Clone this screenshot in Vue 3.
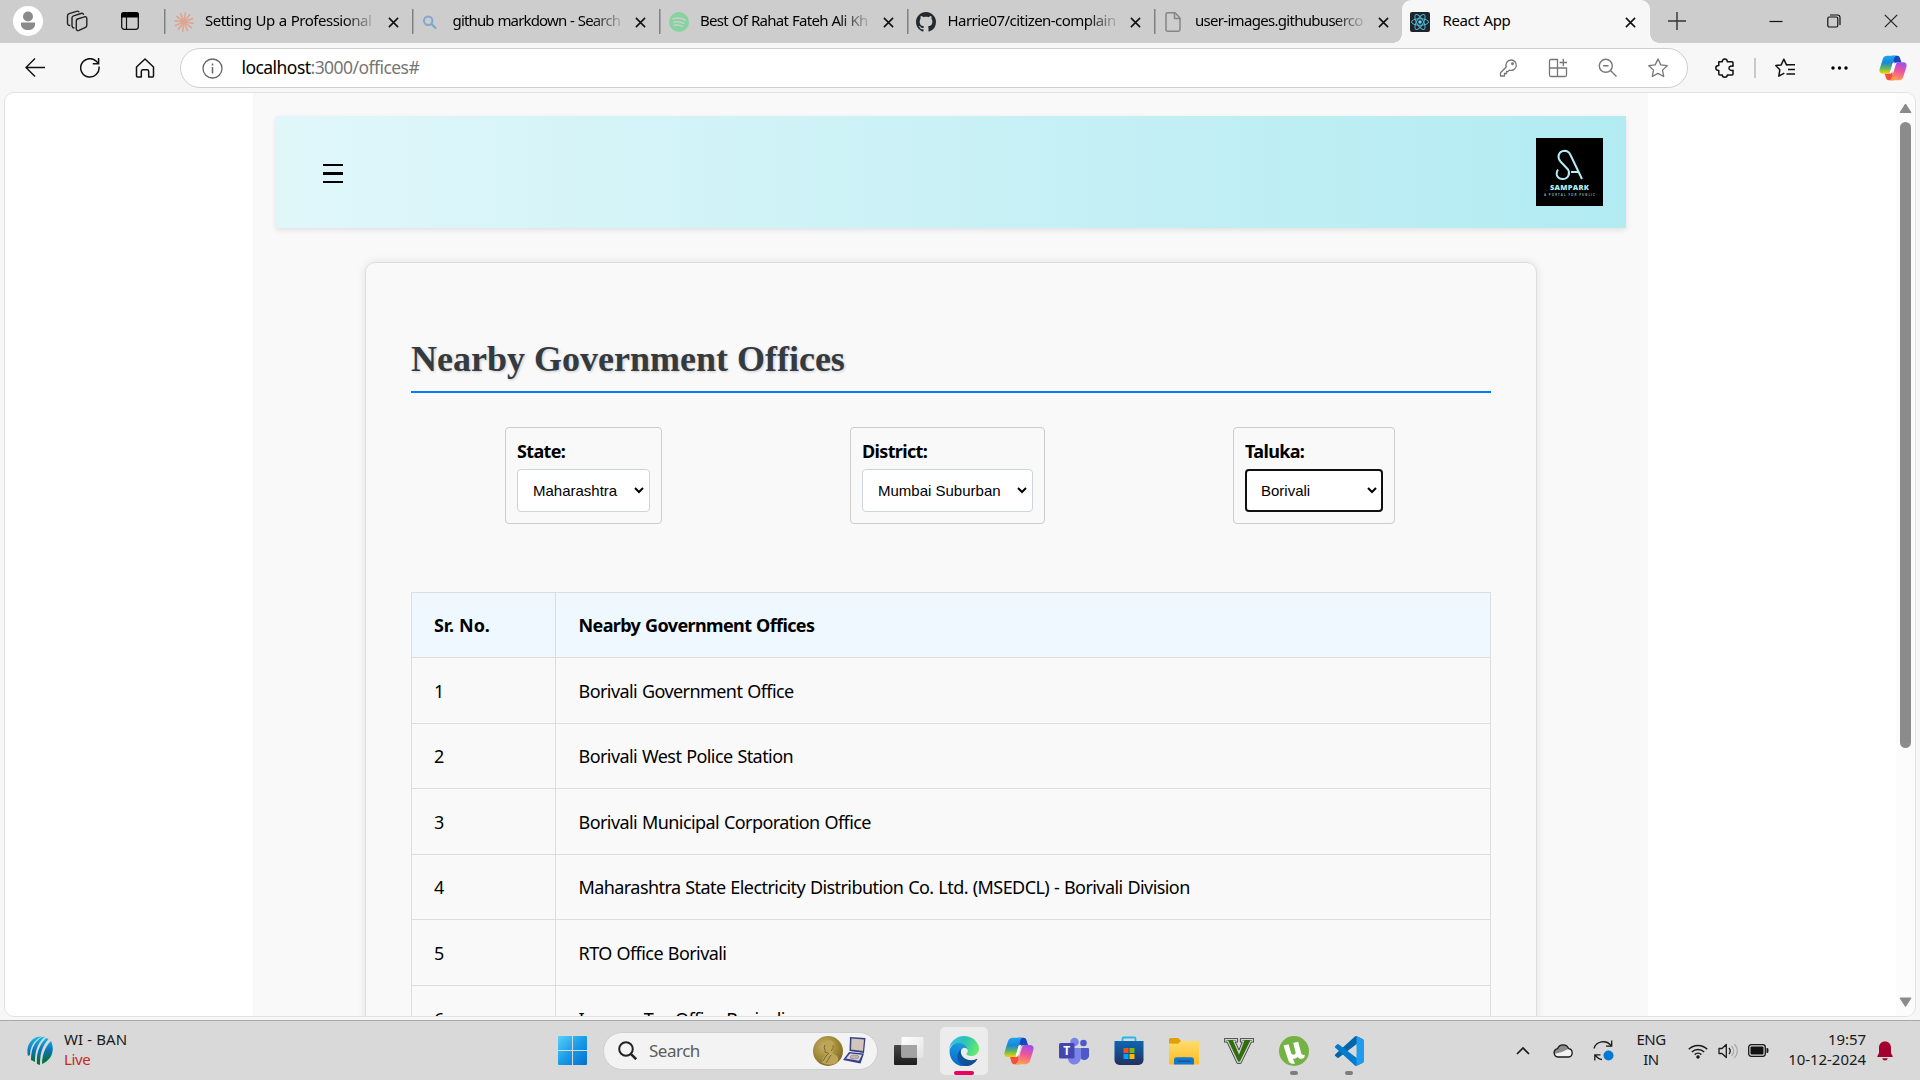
<script setup>
const tabs = [
  { icon: 'claude', title: 'Setting Up a Professional' },
  { icon: 'search', title: 'github markdown - Search' },
  { icon: 'spotify', title: 'Best Of Rahat Fateh Ali Kh' },
  { icon: 'github', title: 'Harrie07/citizen-complain' },
  { icon: 'file', title: 'user-images.githubuserco' },
]

const filters = [
  { label: 'State:', value: 'Maharashtra', size: 'state' },
  { label: 'District:', value: 'Mumbai Suburban', size: 'district' },
  { label: 'Taluka:', value: 'Borivali', size: 'taluka' },
]

const offices = [
  'Borivali Government Office',
  'Borivali West Police Station',
  'Borivali Municipal Corporation Office',
  'Maharashtra State Electricity Distribution Co. Ltd. (MSEDCL) - Borivali Division',
  'RTO Office Borivali',
  'Income Tax Office Borivali',
]

const rays = Array.from({ length: 12 }, (_, i) => i * 30 + 8)
</script>

<template>
  <div class="screen">
    <svg class="defs" width="0" height="0">
      <defs>
        <linearGradient id="cpA" x1="0" y1="0" x2="0" y2="1">
          <stop offset="0" stop-color="#1aa5f0" /><stop offset=".4" stop-color="#1c86d8" />
          <stop offset=".7" stop-color="#5fb95a" /><stop offset="1" stop-color="#ffd000" />
        </linearGradient>
        <linearGradient id="cpB" x1=".6" y1="0" x2=".4" y2="1">
          <stop offset="0" stop-color="#a24de8" /><stop offset=".5" stop-color="#f0569a" />
          <stop offset="1" stop-color="#ffa04d" />
        </linearGradient>
        <symbol id="copilot" viewBox="0 0 30 28">
          <path d="M14 .8h5.500c2 0 2.700 1.300 3.200 3l1.400 4.400h-4.600c-2 0-3 .8-3.500 2.500z" fill="#1747c0" />
          <path d="M16 27.200h-5.500c-2 0-2.700-1.300-3.200-3l-1.400-4.400h4.600c2 0 3-.8 3.500-2.500z" fill="#f2503b" />
          <path d="M9 .8h9.800c-1.700.6-2.300 2-2.900 4l-3.800 12.400c-.6 2-1.500 2.900-3.600 2.900H4.100C.8 20.100-.2 17.800.7 14.700L4 4.300C4.700 2 6.300.8 9 .8z" fill="url(#cpA)" />
          <path d="M21 27.200h-9.800c1.700-.6 2.300-2 2.900-4l3.800-12.400c.6-2 1.500-2.900 3.600-2.900h4.400c3.300 0 4.300 2.300 3.400 5.400L26 23.700c-.7 2.300-2.300 3.500-5 3.500z" fill="url(#cpB)" />
          <path d="M14.200 10.500c.6-1.700 1.400-2.500 3-2.700l-2.900 9.700c-.6 1.700-1.300 2.500-2.900 2.700z" fill="#fff" />
        </symbol>
        <symbol id="cross" viewBox="0 0 12 12">
          <path d="M1 1l10 10M11 1L1 11" fill="none" stroke="#111" stroke-width="1.700" />
        </symbol>
      </defs>
    </svg>

    <header class="tabstrip">
      <div class="strip-left">
        <span class="avatar">
          <svg width="30" height="30"><circle cx="15" cy="10.500" r="5" fill="#8a8a8a" /><path d="M8 16.500h14v2c0 3.500-3 5.500-7 5.500s-7-2-7-5.500z" fill="#8a8a8a" /></svg>
        </span>
        <svg class="i-spaces" width="22" height="22" viewBox="0 0 22 22" fill="none" stroke="#222" stroke-width="1.400">
          <path d="M11.500 9l7-2.200c1.500-.4 2.300.4 2.300 2v6.400c0 1.200-.6 2-1.800 2.500l-6 2.700c-1.500.6-2.700 0-2.700-1.700v-7.600c0-1.100.4-1.700 1.200-2.100z" />
          <path d="M8.500 17.800c-1.600.2-2.500-.6-2.500-2.200V7.800c0-1 .6-1.700 1.600-2L15 3.500c1.300-.4 2.300 0 2.700 1.200" />
          <path d="M4.300 15.500c-1.600.2-2.800-.7-2.800-2.200V6c0-1.200.5-2 1.600-2.300L10.500 1.300c1.300-.4 2.300 0 2.700 1" />
        </svg>
        <svg class="i-actions" width="18" height="18" viewBox="0 0 18 18"><rect x=".7" y=".7" width="16.600" height="16.600" rx="2.500" fill="none" stroke="#111" stroke-width="1.300" /><path d="M0 5.500V3a3 3 0 0 1 3-3h12a3 3 0 0 1 3 3v2.500z" fill="#000" /><path d="M5.500 5v12.500" stroke="#111" stroke-width="1.200" /></svg>
      </div>

      <div v-for="tab in tabs" :key="tab.icon" class="tab" :class="'t-' + tab.icon">
        <svg v-if="tab.icon === 'claude'" class="fav" viewBox="0 0 20 20"><path v-for="a in rays" :key="a" d="M10 8.500V.8" :transform="`rotate(${a} 10 10)`" stroke="#dfa593" stroke-width="1.600" stroke-linecap="round" /><circle cx="10" cy="10" r="3" fill="#dfa593" /></svg>
        <svg v-else-if="tab.icon === 'search'" class="fav" viewBox="0 0 20 20" fill="none" stroke="#7ba8cf" stroke-width="2"><circle cx="7.200" cy="8.800" r="4.200" /><path d="M10.500 12l4.500 4.500" stroke-width="2.200" /></svg>
        <svg v-else-if="tab.icon === 'spotify'" class="fav" viewBox="0 0 20 20"><circle cx="10" cy="10" r="10" fill="#86d3a0" /><path d="M4 6.800c4-1.200 8.500-.8 12.200 1.200M4.600 10.200c3.500-1 7-.6 10.200 1.200M5.200 13.300c3-.7 5.600-.4 8.200 1.100" fill="none" stroke="#cdcdcd" stroke-width="1.500" stroke-linecap="round" /></svg>
        <svg v-else-if="tab.icon === 'github'" class="fav" viewBox="0 0 16 16"><path fill="#24292e" d="M8 0C3.580 0 0 3.580 0 8c0 3.540 2.290 6.530 5.470 7.590.4.070.55-.17.55-.38 0-.19-.01-.82-.01-1.490-2.010.37-2.530-.49-2.690-.94-.09-.23-.48-.94-.82-1.130-.28-.15-.68-.52-.01-.53.63-.01 1.080.58 1.230.82.72 1.210 1.870.87 2.330.66.070-.52.28-.87.51-1.070-1.780-.2-3.640-.89-3.640-3.950 0-.87.31-1.590.82-2.150-.08-.2-.36-1.020.08-2.120 0 0 .67-.21 2.200.82.64-.18 1.320-.27 2-.27s1.360.09 2 .27c1.530-1.040 2.200-.82 2.200-.82.44 1.100.16 1.920.08 2.120.51.56.82 1.270.82 2.150 0 3.070-1.870 3.750-3.650 3.950.29.25.54.73.54 1.480 0 1.070-.01 1.930-.01 2.200 0 .21.15.46.55.38A8.010 8.010 0 0 0 16 8c0-4.420-3.580-8-8-8z" /></svg>
        <svg v-else class="fav" viewBox="0 0 20 20" fill="none" stroke="#858585" stroke-width="1.500"><path d="M4 .8h7L16 6v11.500c0 1-.7 1.700-1.700 1.700H3.700c-1 0-1.700-.7-1.700-1.700v-15C2 1.500 2.700.8 4 .8z" /><path d="M10.500 1v5.500H16" /></svg>
        <span class="tab-title faded">{{ tab.title }}</span>
        <svg class="close"><use href="#cross" /></svg>
      </div>

      <div class="tab active">
        <svg class="fav" viewBox="0 0 20 20"><rect width="20" height="20" rx="2" fill="#20232a" /><g fill="none" stroke="#4cb8d6" stroke-width="1"><ellipse cx="10" cy="10" rx="8.500" ry="3.300" /><ellipse cx="10" cy="10" rx="8.500" ry="3.300" transform="rotate(60 10 10)" /><ellipse cx="10" cy="10" rx="8.500" ry="3.300" transform="rotate(120 10 10)" /></g><circle cx="10" cy="10" r="1.700" fill="#61dafb" /></svg>
        <span class="tab-title">React App</span>
        <svg class="close"><use href="#cross" /></svg>
      </div>

      <svg class="plus" width="18" height="18"><path d="M9 0v18M0 9h18" stroke="#333" stroke-width="1.400" /></svg>
      <div class="win-buttons">
        <svg width="14" height="14"><path d="M.5 7.500h13" stroke="#111" stroke-width="1.200" /></svg>
        <svg width="14" height="14" fill="none" stroke="#111" stroke-width="1.200"><rect x=".8" y="3" width="10" height="10" rx="1.500" /><path d="M3 1h7.500C12 1 13 2 13 3.500V11" /></svg>
        <svg width="14" height="14"><path d="M.8.8l12.400 12.400M13.200.8L.8 13.200" stroke="#222" stroke-width="1.200" /></svg>
      </div>
    </header>

    <nav class="toolbar">
      <div class="nav-icons">
        <svg width="20" height="20" fill="none" stroke="#111" stroke-width="1.400"><path d="M20 9.500H1M10 .5l-9 9 9 9" /></svg>
        <svg width="20" height="20" fill="none" stroke="#111" stroke-width="1.500"><path d="M19 8.500A9.200 9.200 0 1 1 15.800 2.800L18.500 5.500" /><path d="M18.600 0v5.700h-5.800" /></svg>
        <svg width="20" height="20" fill="none" stroke="#111" stroke-width="1.500"><path d="M1.500 9L10 1l8.500 8v9c0 .6-.4 1-1 1h-3.800v-5.500c0-1-.6-1.700-1.600-1.700H8c-1 0-1.700.7-1.700 1.700V19H2.500c-.6 0-1-.4-1-1z" stroke-linejoin="round" /></svg>
      </div>
      <div class="omnibox">
        <svg width="21" height="21" fill="none" stroke="#666" stroke-width="1.300"><circle cx="10.500" cy="10.500" r="9.500" /><path d="M10.500 9v6.500M10.500 5.500v2" stroke-width="1.500" /></svg>
        <span class="url"><b>localhost</b>:3000/offices#</span>
        <svg width="20" height="20" fill="none" stroke="#767676" stroke-width="1.300"><path d="M13 2a5.200 5.200 0 1 1-1.600 10.100L10 13.500H8.500v2H6.500V18H2.500v-3.300L8.200 9A5.300 5.300 0 0 1 13 2z" stroke-linejoin="round" /><circle cx="14.500" cy="5.800" r=".8" fill="#767676" /></svg>
        <svg width="20" height="20" fill="none" stroke="#767676" stroke-width="1.300"><path d="M9.500 18.500V1.500H3c-.8 0-1.500.7-1.500 1.500v14c0 .8.700 1.500 1.500 1.500h14c.8 0 1.500-.7 1.500-1.500v-7H1.500M15.300.8v7.400M11.600 4.500H19" /></svg>
        <svg width="20" height="20" fill="none" stroke="#767676" stroke-width="1.400"><circle cx="7.800" cy="7.800" r="6.500" /><path d="M5 7.800h5.600M12.500 12.500l6 6" /></svg>
        <svg width="20" height="20" fill="none" stroke="#767676" stroke-width="1.300"><path d="M10 1l2.800 5.900 6.400.8-4.700 4.400 1.200 6.400L10 15.400l-5.700 3.100 1.200-6.400L.8 7.700l6.400-.8z" stroke-linejoin="round" /></svg>
      </div>
      <svg class="puzzle" width="20" height="20" fill="none" stroke="#111" stroke-width="1.500"><path d="M3.800 3.800h3.500c0-1.600 1-2.800 2.500-2.800s2.500 1.200 2.500 2.800H17c.6 0 1 .4 1 1v3.400c-1.800-.5-4 .1-4 2s2.200 2.500 4 2V16c0 .6-.4 1-1 1h-4.700c0 1.200-1 2.200-2.500 2.200S7.300 18.200 7.300 17H4.800c-.6 0-1-.4-1-1v-3.500C2 12.500.8 11.600.8 10s1.200-2.500 3-2.500z" stroke-linejoin="round" /></svg>
      <span class="bar-sep"></span>
      <svg class="favs" width="20" height="20" fill="none" stroke="#111" stroke-width="1.500"><path d="M12.500 6.800h-1L8.800 1.200 6.200 6.900l-5.400.6 4 4.300-1 6.400 5.500-3" stroke-linejoin="round" /><path d="M11.300 6.800H20M13 11.500h7M11.500 16H20" /></svg>
      <svg class="dots" width="17" height="4"><circle cx="2" cy="2" r="1.700" /><circle cx="8.500" cy="2" r="1.700" /><circle cx="15" cy="2" r="1.700" /></svg>
      <svg class="cp" width="28" height="26"><use href="#copilot" /></svg>
    </nav>

    <div class="viewport">
      <div class="page">
        <div class="app">
          <div class="banner">
            <span class="menu"><i></i><i></i><i></i></span>
            <svg class="logo" width="67" height="68" viewBox="0 0 67 68">
              <rect width="67" height="68" />
              <path d="M22 31.500c-3.500 6 .5 9.500 4.500 9.500 6 0 8-6 5.500-9.500l-7.500-8c-3.800-4.300-2-10.500 4-10.800 3 0 4.800 1.500 6 4.300L46 41M35 34h8" fill="none" stroke="#b2ebf2" stroke-width="2" />
              <text class="logo-name" x="33.500" y="51.800" textLength="39" text-anchor="middle">SAMPARK</text>
              <text class="logo-tag" x="33.500" y="57.600" textLength="51" text-anchor="middle">A PORTAL FOR PUBLIC</text>
            </svg>
          </div>

          <main class="card">
            <h1>Nearby Government Offices</h1>
            <div class="filters">
              <div v-for="f in filters" :key="f.label" class="filter" :class="f.size">
                <label>{{ f.label }}</label>
                <div class="select">
                  <span>{{ f.value }}</span>
                  <svg width="10" height="7"><path d="M1 1l4 4 4-4" fill="none" stroke="#000" stroke-width="2" /></svg>
                </div>
              </div>
            </div>
            <div class="table">
              <div class="row head"><span>Sr. No.</span><span>Nearby Government Offices</span></div>
              <div v-for="(o, i) in offices" :key="o" class="row"><span>{{ i + 1 }}</span><span>{{ o }}</span></div>
            </div>
          </main>
        </div>
      </div>
      <div class="scroll">
        <svg width="13" height="11"><path d="M6.500 1L12 9.500H1z" fill="#8b8b8b" stroke="#8b8b8b" stroke-linejoin="round" /></svg>
        <span class="thumb"></span>
        <svg width="13" height="11"><path d="M6.500 9.500L12 1H1z" fill="#8b8b8b" stroke="#8b8b8b" stroke-linejoin="round" /></svg>
      </div>
    </div>

    <footer class="taskbar">
      <div class="widget">
        <svg width="26" height="29" viewBox="0 0 26 29">
          <defs><linearGradient id="icc" gradientUnits="userSpaceOnUse" x1="12" y1="0" x2="14" y2="29"><stop offset="0" stop-color="#19bfe8" /><stop offset=".5" stop-color="#0a74b8" /><stop offset=".85" stop-color="#067048" /></linearGradient></defs>
          <g fill="url(#icc)"><path d="M1 20C-1 12 2 4 10 1L15 .5C7 4 3 11 3 19z" /><path d="M4 24C4 15 6 7 14 1.500l4-1C10 8 8 15 8 26z" /><path d="M10 28C9 18 12 9 19 2l2.500 1C15 10 13 18 13 29z" /><path d="M15 28c0-9 3-17 9-23 4 9 1 19-9 23z" /></g>
        </svg>
        <div class="widget-text"><span>WI - BAN</span><span class="live">Live</span></div>
      </div>

      <div class="start">
        <svg width="29" height="29" viewBox="0 0 29 29"><defs><linearGradient id="win" x1="0" y1="0" x2="1" y2="1"><stop offset="0" stop-color="#55d3fb" /><stop offset=".5" stop-color="#1a9be6" /><stop offset="1" stop-color="#0470d2" /></linearGradient></defs><path d="M0 1a1 1 0 0 1 1-1h13v14H0zM15 0h13a1 1 0 0 1 1 1v13H15zM0 15h14v14H1a1 1 0 0 1-1-1zM15 15h14v13a1 1 0 0 1-1 1H15z" fill="url(#win)" /></svg>
      </div>

      <div class="search">
        <svg width="19" height="19" fill="none" stroke="#222" stroke-width="2"><circle cx="8" cy="8" r="6.800" /><path d="M12.800 12.800l5.400 5.400" stroke-width="2.500" /></svg>
        <span>Search</span>
        <svg class="medal" width="53" height="30" viewBox="0 0 53 30">
          <defs><radialGradient id="gold" cx=".4" cy=".35" r=".7"><stop offset="0" stop-color="#c9b266" /><stop offset=".6" stop-color="#a08838" /><stop offset="1" stop-color="#7c6520" /></radialGradient></defs>
          <circle cx="15" cy="15" r="15" fill="url(#gold)" />
          <path d="M11 9c0-4 4.500-6 8-4 3 1.800 3 6 1 9l-.5 3 4.500 3c2 3 1.500 4 0 6.500-4 3-10 3-15 0l1-4.500 4-4-2-.5-.5-3-1.500-1z" fill="#bba557" />
          <path d="M10 25l3-5 3-3M18 19l-5 8M12 9l-1 3 1 1v3l3 1M20 9c1 3-1 5-2 6" fill="none" stroke="#75602a" stroke-width=".9" />
          <path d="M37 1l15.500 1-1.500 15-14.500-2z" fill="#36407f" /><path d="M38.500 2.500L51 3.500 50 15l-12-1.500z" fill="#d3c4be" />
          <path d="M36 16l15 1.500-3.500 10L30 24z" fill="#34418f" /><path d="M37 17.500l12 1.200-3 6L33 22.500z" fill="#e1d7d5" /><ellipse cx="41.500" cy="21" rx="4.500" ry="2" fill="#c3b3b0" stroke="#8d7f80" stroke-width=".6" />
        </svg>
      </div>

      <div class="apps">
        <span class="cell"><svg width="30" height="30"><defs><linearGradient id="tvd" x1="0" y1="0" x2="0" y2="1"><stop offset="0" stop-color="#484848" /><stop offset="1" stop-color="#1c1c1c" /></linearGradient><linearGradient id="tvl" x1="0" y1="0" x2="1" y2="1"><stop offset="0" stop-color="#fff" /><stop offset="1" stop-color="#e3e3e3" /></linearGradient></defs><rect y="9" width="23" height="20" rx="1" fill="url(#tvd)" /><rect x="7.500" y="1" width="22" height="20.500" rx="1" fill="url(#tvl)" /><path d="M7.500 9H23v12.500H8.500a1 1 0 0 1-1-1z" fill="#a3a3a3" /></svg></span>

        <span class="cell on"><svg width="30" height="30" viewBox="0 0 256 256"><defs><linearGradient id="eg1" x1="0" y1="0" x2="1" y2="0"><stop offset="0" stop-color="#0c59a4" /><stop offset="1" stop-color="#114a8b" /></linearGradient><linearGradient id="eg2" x1=".5" y1="0" x2=".3" y2="1"><stop offset="0" stop-color="#1b9de2" /><stop offset=".5" stop-color="#1183d6" /><stop offset="1" stop-color="#0667ca" /></linearGradient><linearGradient id="eg3" x1="0" y1=".2" x2="1" y2=".5"><stop offset="0" stop-color="#35c1f1" /><stop offset=".5" stop-color="#2cc2b4" /><stop offset="1" stop-color="#66eb6e" /></linearGradient></defs><path fill="url(#eg1)" d="M235.700 195.500a93.700 93.700 0 0 1-10.600 4.700 101.900 101.900 0 0 1-35.900 6.400c-47.300 0-88.500-32.500-88.500-74.300a31.500 31.500 0 0 1 16.400-27.300c-42.800 1.800-53.800 46.400-53.800 72.500 0 74 68.100 81.400 82.800 81.400 7.900 0 19.800-2.300 27-4.600l1.300-.4a128.300 128.300 0 0 0 66.600-52.800 4 4 0 0 0-5.300-5.600z" /><path fill="url(#eg2)" d="M110.300 246.300A79.200 79.200 0 0 1 87.600 225a80.700 80.700 0 0 1 29.500-120c3.200-1.500 8.500-4.100 15.600-4a32.400 32.400 0 0 1 25.700 13 31.900 31.900 0 0 1 6.300 18.700c0-.2 24.500-79.600-80-79.600-43.900 0-80 41.600-80 78.200a130.200 130.200 0 0 0 12.100 56 128 128 0 0 0 156.400 67 75.500 75.500 0 0 1-62.900-8z" /><path fill="url(#eg3)" d="M152.300 148.900c-.8 1-3.300 2.500-3.300 5.700 0 2.600 1.700 5.100 4.700 7.200 14.400 10 41.500 8.700 41.600 8.700a59.600 59.600 0 0 0 30.300-8.300 61.400 61.400 0 0 0 30.400-52.900c.3-22.400-8-37.300-11.300-43.900C223.500 23.900 177.700 0 128 0A128 128 0 0 0 0 126.200c.5-36.500 36.800-66 80-66 3.500 0 23.500.3 42 10a72.600 72.600 0 0 1 30.900 29.300c6.100 10.600 7.200 24.100 7.200 29.500s-2.700 13.300-7.800 19.900z" /></svg><i class="run wide"></i></span>

        <span class="cell"><svg width="30" height="28"><use href="#copilot" /></svg></span>

        <span class="cell"><svg width="30" height="28" viewBox="0 0 30 28"><circle cx="24.500" cy="6" r="3.300" fill="#5059c9" /><path d="M20 11h9a1.200 1.200 0 0 1 1.200 1.200V18a5 5 0 0 1-8 4z" fill="#4f58c8" /><circle cx="15.500" cy="5" r="4.300" fill="#7b83eb" /><path d="M9 11h13v9c0 4-3 7.500-6.800 7.500C12 27.500 9 25 9 21z" fill="#7b83eb" /><rect y="6" width="15.500" height="15.500" rx="1.500" fill="#4348b0" /><text class="tee" x="7.800" y="18" text-anchor="middle">T</text></svg></span>

        <span class="cell"><svg width="30" height="30" viewBox="0 0 30 30"><defs><linearGradient id="st" x1="0" y1="0" x2="0" y2="1"><stop offset="0" stop-color="#0b66b5" /><stop offset="1" stop-color="#23305e" /></linearGradient></defs><path d="M8.500 6V2.500c0-.6.400-1 1-1h11c.6 0 1 .4 1 1V6" fill="none" stroke="#29b6f0" stroke-width="1.800" /><path d="M.5 5h29v19a5 5 0 0 1-5 5h-19a5 5 0 0 1-5-5z" fill="url(#st)" /><path d="M9.500 12h5v5h-5z" fill="#f25022" /><path d="M15.500 12h5v5h-5z" fill="#7fba00" /><path d="M9.500 18h5v5h-5z" fill="#00a4ef" /><path d="M15.500 18h5v5h-5z" fill="#ffb900" /></svg></span>

        <span class="cell"><svg width="30" height="28" viewBox="0 0 30 28"><defs><linearGradient id="fo" x1="0" y1="0" x2="0" y2="1"><stop offset="0" stop-color="#ffdc6b" /><stop offset="1" stop-color="#fcbc20" /></linearGradient></defs><path d="M0 2.500A1.500 1.500 0 0 1 1.500 1h7.600l3 3v5H0z" fill="#dfa008" /><path d="M0 6.500l9 .2 3-2.700h18v22.500c0 .6-.4 1-1 1H1c-.6 0-1-.4-1-1z" fill="url(#fo)" /><path d="M5 27.500V23c0-1.800 1-2.700 2.700-2.700h14.600c1.800 0 2.700 1 2.700 2.700v4.500z" fill="#1477cd" /><path d="M8.500 24.200h13" stroke="#0a4f96" stroke-width="1.200" /></svg></span>

        <span class="cell"><svg width="30" height="26" viewBox="0 0 30 26"><path d="M1 1h12v2.500h-2.500L15 14l4-10.500h-2V1h12v2.500h-2L16.500 24.500h-3L3.500 3.500H1z" fill="#2f6e0c" stroke="#cfcfcf" stroke-width="2" /><path d="M.4.4h13.200v3.700h-2.200L15 12l3.200-7.900h-1.800V.4h13.200v3.700h-2.200L16.900 25.400h-3.800L3.100 4.100H.4z" fill="none" stroke="#3a3a3a" stroke-width=".9" /></svg></span>

        <span class="cell"><svg width="30" height="30" viewBox="0 0 30 30"><circle cx="15" cy="15" r="15" fill="#73b243" /><path d="M4.500 9.500l5-1.200 2.700 9c.6 2 4.800 2 4.400-1L14.200 7l5-1.200 3 11.500c.6 1.500 1.800 2 3.600 1.400l-.6 3.300c-3.200 1.500-5.400.7-6.800-1.300-1 1.700-2.600 2.300-4.500 2L16 27.500c-3.500.7-5.600 0-6.600-3z" fill="#fff" /></svg><i class="run"></i></span>

        <span class="cell"><svg width="30" height="30" viewBox="0 0 100 100"><path d="M96.500 10.800L75.900.9a6.200 6.200 0 0 0-7.100 1.200L4.500 60.700a4.200 4.200 0 0 0 0 6.100l5.500 5a4.200 4.200 0 0 0 5.300.3L93.400 13c2.600-2 6.400-.1 6.400 3.200v-.2a6.200 6.200 0 0 0-3.300-5.200z" fill="#0065a9" /><path d="M96.500 89.200l-20.600 9.900a6.200 6.200 0 0 1-7.100-1.200L4.500 39.300a4.200 4.200 0 0 1 0-6.100l5.500-5a4.200 4.200 0 0 1 5.300-.3L93.400 87c2.600 2 6.400.1 6.400-3.200v.2a6.200 6.200 0 0 1-3.300 5.200z" fill="#007acc" /><path d="M75.900 99.100a6.200 6.200 0 0 1-7.100-1.200c2.300 2.300 6.200.7 6.200-2.600V4.700c0-3.300-3.900-4.900-6.200-2.600a6.200 6.200 0 0 1 7.100-1.200l20.600 9.900A6.200 6.200 0 0 1 100 16.400v67.200a6.200 6.200 0 0 1-3.500 5.600z" fill="#1f9cf0" /></svg><i class="run"></i></span>
      </div>

      <div class="tray">
        <svg width="14" height="8"><path d="M1 7l6-6 6 6" fill="none" stroke="#1a1a1a" stroke-width="1.700" /></svg>
        <svg class="cloud" width="20" height="15" viewBox="0 0 20 15"><path d="M5 14a4.200 4.200 0 0 1-.5-8.300 6 6 0 0 1 11.200 0A4.200 4.200 0 0 1 15.500 14z" fill="#f3f3f3" /><path d="M1 11C0 8 2 6 4.500 5.700a6 6 0 0 1 11.200 0L9 9z" fill="#8c8c8c" /><path d="M5 14a4.200 4.200 0 0 1-.5-8.300 6 6 0 0 1 11.200 0A4.200 4.200 0 0 1 15.500 14z" fill="none" stroke="#1a1a1a" stroke-width="1.300" /></svg>
        <svg class="sync" width="21" height="21" fill="none" stroke="#1a1a1a" stroke-width="1.300"><path d="M1 8.500C3 1.500 13-1 18.300 5.800M18.700.5v5.700H13M9 19.500c-3-.3-5-1.700-6.800-4.300M1.800 20.500v-5.700h5.700" /><circle cx="15.500" cy="15.500" r="5" fill="#0078d4" stroke="none" /></svg>
        <div class="lang"><span>ENG</span><span>IN</span></div>
        <svg class="wifi" width="20" height="16" fill="none" stroke="#1a1a1a" stroke-width="1.500"><path d="M.8 6.300a13 13 0 0 1 18.400 0M3.800 9a8.800 8.800 0 0 1 12.400 0M6.700 11.600a4.700 4.700 0 0 1 6.600 0" /><circle cx="10" cy="14" r="1.400" fill="#1a1a1a" stroke-width=".6" /></svg>
        <svg class="vol" width="21" height="16" fill="none" stroke="#1a1a1a" stroke-width="1.300"><path d="M1 5.500h3L8.300 1.500v13L4 10.500H1z" stroke-linejoin="round" /><path d="M11 5c1.500 1.800 1.500 4.200 0 6" /><path d="M13.500 3c2.800 3 2.800 7 0 10M16.300 1c4 4 4 10 0 14" stroke="#aaa" /></svg>
        <svg class="bat" width="21" height="13"><rect x=".7" y=".7" width="16.600" height="11.600" rx="2.500" fill="none" stroke="#1a1a1a" stroke-width="1.300" /><rect x="2.500" y="2.500" width="13" height="8" rx="1" fill="#111" /><path d="M18.500 4h.8c.8 0 1.200.7 1.200 2.500S20 9 19.300 9h-.8z" fill="#1a1a1a" /></svg>
        <div class="clock"><span>19:57</span><span>10-12-2024</span></div>
        <svg class="bell" width="16" height="20"><path d="M8 .5c3.700 0 6 2.600 6 6.200V12l1.700 3.200c.2.500 0 .8-.5.800H.8c-.5 0-.7-.3-.5-.8L2 12V6.700C2 3.100 4.300.5 8 .5zM5.300 17.300h5.400c-.3 1.400-1.400 2.200-2.700 2.200s-2.400-.8-2.700-2.200z" fill="#a4002f" /></svg>
      </div>
    </footer>
  </div>
</template>

<style>
html, body { margin: 0; overflow: hidden; }
</style>

<style scoped>
* { box-sizing: border-box; }
.screen { width: 1920px; height: 1080px; display: flex; flex-direction: column; background: #f7f7f7; font-family: "Noto Sans", "Open Sans", sans-serif; color: #000; overflow: hidden; white-space: nowrap; }
svg { display: block; flex: none; }
.defs { position: absolute; }

.tabstrip { height: 43px; flex: none; display: flex; background: #cdcdcd; }
.strip-left { width: 164px; display: flex; align-items: center; padding: 0 0 1px 13px; }
.avatar { width: 30px; height: 30px; border-radius: 50%; background: #fff; }
.i-spaces { margin-left: 23px; }
.i-actions { margin-left: 33px; }
.tab { width: 247.500px; height: 43px; flex: none; display: flex; align-items: center; padding: 1px 0 0 9.500px; background: linear-gradient(#808080, #808080) 0 9px / 1.500px 25px no-repeat; }
.fav { width: 20px; height: 20px; }
.tab-title { width: 168px; margin-left: 11.500px; font-size: 15px; letter-spacing: -.5px; word-spacing: .7px; line-height: 22px; padding-bottom: 4px; }
.t-search .tab-title { letter-spacing: -.85px; }
.t-spotify .tab-title { letter-spacing: -.7px; word-spacing: .5px; }
.t-github .tab-title { letter-spacing: -.55px; }
.t-file .tab-title { letter-spacing: -.7px; }
.faded { -webkit-mask-image: linear-gradient(90deg, #000 138px, rgba(0, 0, 0, .15) 168px); mask-image: linear-gradient(90deg, #000 138px, rgba(0, 0, 0, .15) 168px); }
.close { width: 11px; height: 11px; margin-left: 14.500px; }
.tab.active { position: relative; width: 248.500px; background: #f7f7f7; border-radius: 9px 9px 0 0; padding-left: 8.500px; }
.tab.active .tab-title { margin-left: 12.500px; letter-spacing: -.4px; }
.tab.active::before, .tab.active::after { content: ""; position: absolute; bottom: 0; width: 9px; height: 9px; }
.tab.active::before { left: -9px; background: radial-gradient(circle at 0 0, transparent 8.500px, #f7f7f7 9px); }
.tab.active::after { right: -9px; background: radial-gradient(circle at 100% 0, transparent 8.500px, #f7f7f7 9px); }
.plus { margin: 12px 0 0 17.500px; }
.win-buttons { display: flex; gap: 43.500px; margin: 14px 22px 0 auto; }

.toolbar { height: 49px; flex: none; display: flex; align-items: center; padding-top: 1px; }
.nav-icons { width: 180px; display: flex; gap: 35px; padding-left: 25px; }
.omnibox { width: 1508px; height: 40px; display: flex; align-items: center; gap: 30px; padding: 0 19.500px 0 20.500px; border: 1px solid #cfcfcf; border-radius: 20px; background: #fff; }
.url { margin: -2px auto 0 -11px; font-size: 17.500px; letter-spacing: -.55px; color: #767676; }
.url b { font-weight: 400; color: #000; }
.puzzle { margin-left: 26.500px; }
.bar-sep { width: 1.500px; height: 20px; margin-left: 19.500px; background: #c9c9c9; }
.favs { margin-left: 19px; }
.dots { margin-left: 36px; }
.cp { margin-left: 31px; }

.viewport { height: 925px; flex: none; margin: 0 4px; display: flex; border: 1px solid #e2e2e2; border-radius: 10px; background: #fff; overflow: hidden; }
.page { width: 1891px; height: 923px; display: flex; justify-content: center; overflow: hidden; }
.app { width: 1395px; height: 1400px; padding: 23px 22px 23px 23px; background: #f9f9f9; }
.banner { height: 112px; display: flex; justify-content: space-between; align-items: center; padding: 0 23px 0 47px; background: linear-gradient(90deg, #e0f7fa, #b2ebf2); box-shadow: 0 2px 5px rgba(0, 0, 0, .1); }
.menu { width: 20px; height: 20px; display: flex; flex-direction: column; justify-content: space-between; margin-top: 3px; }
.menu i { height: 2.400px; background: #000; }
.logo-name { font: 800 7.500px "Open Sans", sans-serif; fill: #b2ebf2; }
.logo-tag { font: 700 3px "Open Sans", sans-serif; fill: #7fa9ae; }
.card { width: 1172px; height: 1200px; margin: 34px auto 0; padding: 76px 45px 0; border: 1px solid #ddd; border-radius: 10px; box-shadow: 0 0 8px rgba(0, 0, 0, .1); }
h1 { margin: 0; padding-bottom: 12px; border-bottom: 2px solid #007bff; font: 700 36px/40px "Liberation Serif", serif; color: #343a40; text-shadow: 1px 1px 3px rgba(0, 0, 0, .2); }
.filters { display: flex; justify-content: space-around; margin-top: 34px; padding-right: 2px; }
.filter { height: 97px; padding: 11px; border: 1px solid #ccc; border-radius: 4px; }
.filter label { display: block; font-size: 18px; font-weight: 700; line-height: 24px; letter-spacing: -.65px; }
.select { height: 43px; margin-top: 6px; display: flex; align-items: center; justify-content: space-between; padding: 0 5px 0 15px; border: 1px solid #ced4da; border-radius: 4px; background: #fff; font: 15px "Liberation Sans", sans-serif; }
.state { width: 157px; }
.district { width: 195px; }
.taluka { width: 162px; }
.taluka .select { border: 2px solid #101010; padding: 0 4px 0 14px; }

.table { margin-top: 68px; border: 1px solid #ddd; border-top: 0; }
.row { height: 66px; display: flex; border-top: 1px solid #ddd; font-size: 18px; letter-spacing: -.57px; word-spacing: .7px; }
.row:nth-child(odd) { height: 65px; }
.row span { display: flex; align-items: center; padding: 1px 0 0 22px; }
.row:nth-child(odd) span { padding-top: 0; padding-bottom: 1px; }
.row:last-child span { padding-top: 2px; padding-bottom: 0; }
.row span:first-child { width: 144px; border-right: 1px solid #ddd; }
.row span:last-child { flex: 1; padding-left: 22.500px; }
.head { background: #f0f8ff; font-weight: 700; letter-spacing: -.62px; }
.head span:first-child { letter-spacing: -.1px; }

.scroll { width: 18px; background: #fcfcfc; display: flex; flex-direction: column; align-items: center; padding: 9.500px 0 8px; }
.thumb { width: 11px; height: 626px; margin: 8.500px 0 auto; border-radius: 6px; background: #8b8b8b; }

.taskbar { height: 60px; margin-top: 3px; display: flex; align-items: center; border-top: 1px solid #a8a8a8; background: #d9d9d9; font-size: 15px; color: #1a1a1a; }
.widget { width: 548px; display: flex; align-items: center; gap: 11px; padding-left: 27px; }
.widget-text, .lang, .clock { display: flex; flex-direction: column; line-height: 20px; margin-top: -4px; }
.widget-text { letter-spacing: .1px; }
.lang { letter-spacing: -.5px; }
.clock { letter-spacing: -.05px; }
.live { color: #c42b1c; letter-spacing: -.4px; }
.start { width: 55px; padding-left: 10px; }
.search { width: 275px; height: 38px; display: flex; align-items: center; padding: 0 11px 0 14px; border-radius: 19px; border: 1px solid #cfcfcf; background: #f3f3f3; font-size: 17px; letter-spacing: -.5px; color: #5c5c5c; }
.search span { margin: -1px 0 0 12px; }
.medal { margin-left: auto; }
.apps { display: flex; gap: 7px; margin-left: 7px; }
.cell { position: relative; width: 48px; height: 48px; display: flex; align-items: center; justify-content: center; border-radius: 5px; }
.on { background: #ececec; }
.run { position: absolute; bottom: 0; left: 20px; width: 8px; height: 4px; border-radius: 2px; background: #7d7d7d; }
.wide { left: 14px; width: 20px; background: #ea005e; }
.tee { font: 700 12px "Open Sans", sans-serif; fill: #fff; }
.tray { flex: 1; display: flex; align-items: center; padding-right: 27px; justify-content: flex-end; }
.cloud { margin-left: 23px; }
.sync { margin-left: 20px; }
.lang { width: 30px; margin-left: 22px; align-items: center; }
.wifi { margin-left: 22px; }
.vol { margin-left: 10px; }
.bat { margin-left: 9px; }
.clock { width: 80px; margin-left: 17px; align-items: flex-end; }
.bell { margin-left: 11px; }
</style>
